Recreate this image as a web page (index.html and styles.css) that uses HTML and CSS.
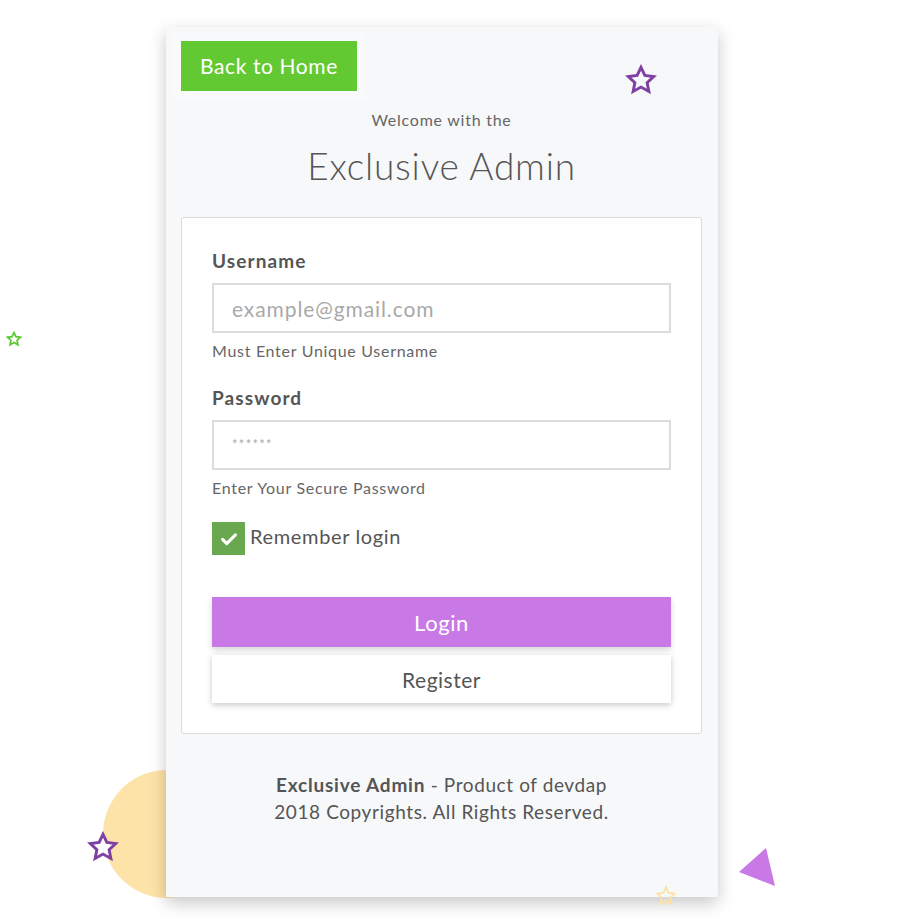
FILE: index.html
```html
<!DOCTYPE html>
<html lang="en">
<head>
<meta charset="utf-8">
<title>Exclusive Admin - Login</title>
<link rel="stylesheet" href="styles.css">
</head>
<body>
<div class="page">
  <div class="deco-circle"></div>
  <svg class="deco star-green" viewBox="0 0 24 24"><path d="M12 2.5l2.9 6.1 6.6.8-4.9 4.6 1.3 6.6L12 17.3l-5.9 3.3 1.3-6.6-4.9-4.6 6.6-.8z"/></svg>
  <svg class="deco star-purple-left" viewBox="0 0 24 24"><path d="M12 2.5l2.9 6.1 6.6.8-4.9 4.6 1.3 6.6L12 17.3l-5.9 3.3 1.3-6.6-4.9-4.6 6.6-.8z"/></svg>
  <svg class="deco star-yellow" viewBox="0 0 24 24"><path d="M12 2.5l2.9 6.1 6.6.8-4.9 4.6 1.3 6.6L12 17.3l-5.9 3.3 1.3-6.6-4.9-4.6 6.6-.8z"/></svg>
  <svg class="deco triangle" viewBox="0 0 40 40"><polygon points="0,24 27,0 36,38"/></svg>

  <main class="card">
    <svg class="deco star-purple-top" viewBox="0 0 24 24"><path d="M12 2.5l2.9 6.1 6.6.8-4.9 4.6 1.3 6.6L12 17.3l-5.9 3.3 1.3-6.6-4.9-4.6 6.6-.8z"/></svg>
    <div class="back-wrap"><a class="back-btn" href="#">Back to Home</a></div>
    <p class="welcome">Welcome with the</p>
    <h1 class="title">Exclusive Admin</h1>

    <form class="form-box">
      <label class="label" for="username">Username</label>
      <input class="input" id="username" type="text" placeholder="example@gmail.com">
      <p class="help">Must Enter Unique Username</p>

      <label class="label label-2" for="password">Password</label>
      <input class="input input-pass" id="password" type="password" placeholder="******">
      <p class="help">Enter Your Secure Password</p>

      <div class="remember">
        <span class="checkbox"><svg viewBox="0 0 24 24"><path d="M5 12.5l4.5 4.5L19 7.5"/></svg></span>
        <span class="remember-text">Remember login</span>
      </div>

      <button class="btn btn-login" type="button">Login</button>
      <button class="btn btn-register" type="button">Register</button>
    </form>

    <footer class="footer">
      <p><strong>Exclusive Admin</strong> - Product of devdap</p>
      <p>2018 Copyrights. All Rights Reserved.</p>
    </footer>
  </main>
</div>
</body>
</html>
```

FILE: styles.css
```css
* { box-sizing: border-box; }
html, body { margin: 0; padding: 0; background: #ffffff; }
body { font-family: "Lato", "Open Sans", sans-serif; color: #555; }

.page {
  position: relative;
  width: 920px;
  height: 920px;
  padding: 27px 0 0 166px;
  overflow: hidden;
}

.deco { position: absolute; }
.deco-circle {
  position: absolute;
  left: 103px;
  top: 770px;
  width: 128px;
  height: 128px;
  border-radius: 50%;
  background: #fee3a8;
}
.star-green { left: 6px; top: 331px; width: 16px; height: 16px; fill: none; stroke: #5ac92e; stroke-width: 2.6; stroke-linejoin: miter; }
.star-purple-left { left: 87px; top: 831px; width: 32px; height: 32px; fill: #fff; stroke: #7f40a2; stroke-width: 2.2; z-index: 2; }
.star-yellow { left: 655px; top: 885px; width: 22px; height: 22px; fill: none; stroke: #fde2a6; stroke-width: 2; z-index: 2; }
.star-purple-top { left: 459px; top: 37px; width: 32px; height: 32px; fill: none; stroke: #7f40a2; stroke-width: 2.2; }
.triangle { left: 739px; top: 848px; width: 40px; height: 40px; fill: #c879e6; }

.card {
  position: relative;
  z-index: 1;
  width: 552px;
  height: 870px;
  background: #f7f8fa;
  box-shadow: 0 6px 16px rgba(0, 0, 0, 0.22);
  padding: 14px 16px 0 15px;
}

.back-wrap {
  display: inline-block;
  margin: -8px;
  padding: 8px;
  background: #f9fafb;
}
.back-btn {
  display: block;
  width: 176px;
  height: 50px;
  line-height: 50px;
  text-align: center;
  background: #63c932;
  color: #fff;
  font-size: 21px;
  letter-spacing: 0.6px;
  text-decoration: none;
}

.welcome {
  margin: 17px 0 0;
  text-align: center;
  font-size: 16px;
  line-height: 24px;
  letter-spacing: 0.75px;
  color: #666;
}
.title {
  margin: 11px 0 0;
  text-align: center;
  font-size: 37px;
  line-height: 46px;
  font-weight: 300;
  letter-spacing: 0.8px;
  color: #555;
}

.form-box {
  display: flex;
  flex-direction: column;
  align-items: flex-start;
  margin: 28px 0 0;
  background: #fff;
  border: 1px solid #dcdcdc;
  border-radius: 3px;
  padding: 31px 30px 30px;
}
.label {
  font-size: 19px;
  line-height: 24px;
  font-weight: 700;
  letter-spacing: 1.1px;
  color: #555;
}
.label-2 { margin-top: 24px; }
.input {
  margin-top: 10px;
  width: 100%;
  height: 50px;
  border: 2px solid #dcdcdc;
  padding: 0 18px;
  font-family: inherit;
  font-size: 21px;
  letter-spacing: 0.9px;
  color: #555;
  outline: none;
  background: #fff;
}
.input::placeholder { color: #a9a9a9; }
.input-pass { font-size: 13px; padding-bottom: 3px; letter-spacing: 1.3px; }
.help {
  margin: 7px 0 0;
  font-size: 16px;
  line-height: 22px;
  letter-spacing: 0.7px;
  color: #666;
}

.remember {
  display: flex;
  align-items: center;
  gap: 5px;
  margin-top: 23px;
}
.checkbox {
  display: flex;
  align-items: center;
  justify-content: center;
  width: 33px;
  height: 33px;
  background: #6aa84f;
}
.checkbox svg { width: 22px; height: 22px; fill: none; stroke: #fff; stroke-width: 3.4; stroke-linecap: round; stroke-linejoin: round; }
.remember-text { font-size: 20px; line-height: 24px; padding-bottom: 5px; letter-spacing: 0.65px; color: #555; }

.btn {
  width: 100%;
  border: none;
  font-family: inherit;
  cursor: pointer;
}
.btn-login {
  margin-top: 42px;
  height: 50px;
  background: #c879e6;
  color: #fff;
  font-size: 22px;
  letter-spacing: 0.6px;
  box-shadow: 0 3px 6px rgba(0, 0, 0, 0.16);
}
.btn-register {
  margin-top: 8px;
  height: 48px;
  background: #fff;
  color: #555;
  font-size: 21px;
  letter-spacing: 0.5px;
  box-shadow: 0 2px 6px rgba(0, 0, 0, 0.22);
}

.footer {
  margin-top: 37px;
  text-align: center;
  font-size: 19px;
  line-height: 27px;
  letter-spacing: 0.6px;
  color: #555;
}
.footer p { margin: 0; }
.footer strong { font-weight: 700; letter-spacing: 0.8px; }
```
